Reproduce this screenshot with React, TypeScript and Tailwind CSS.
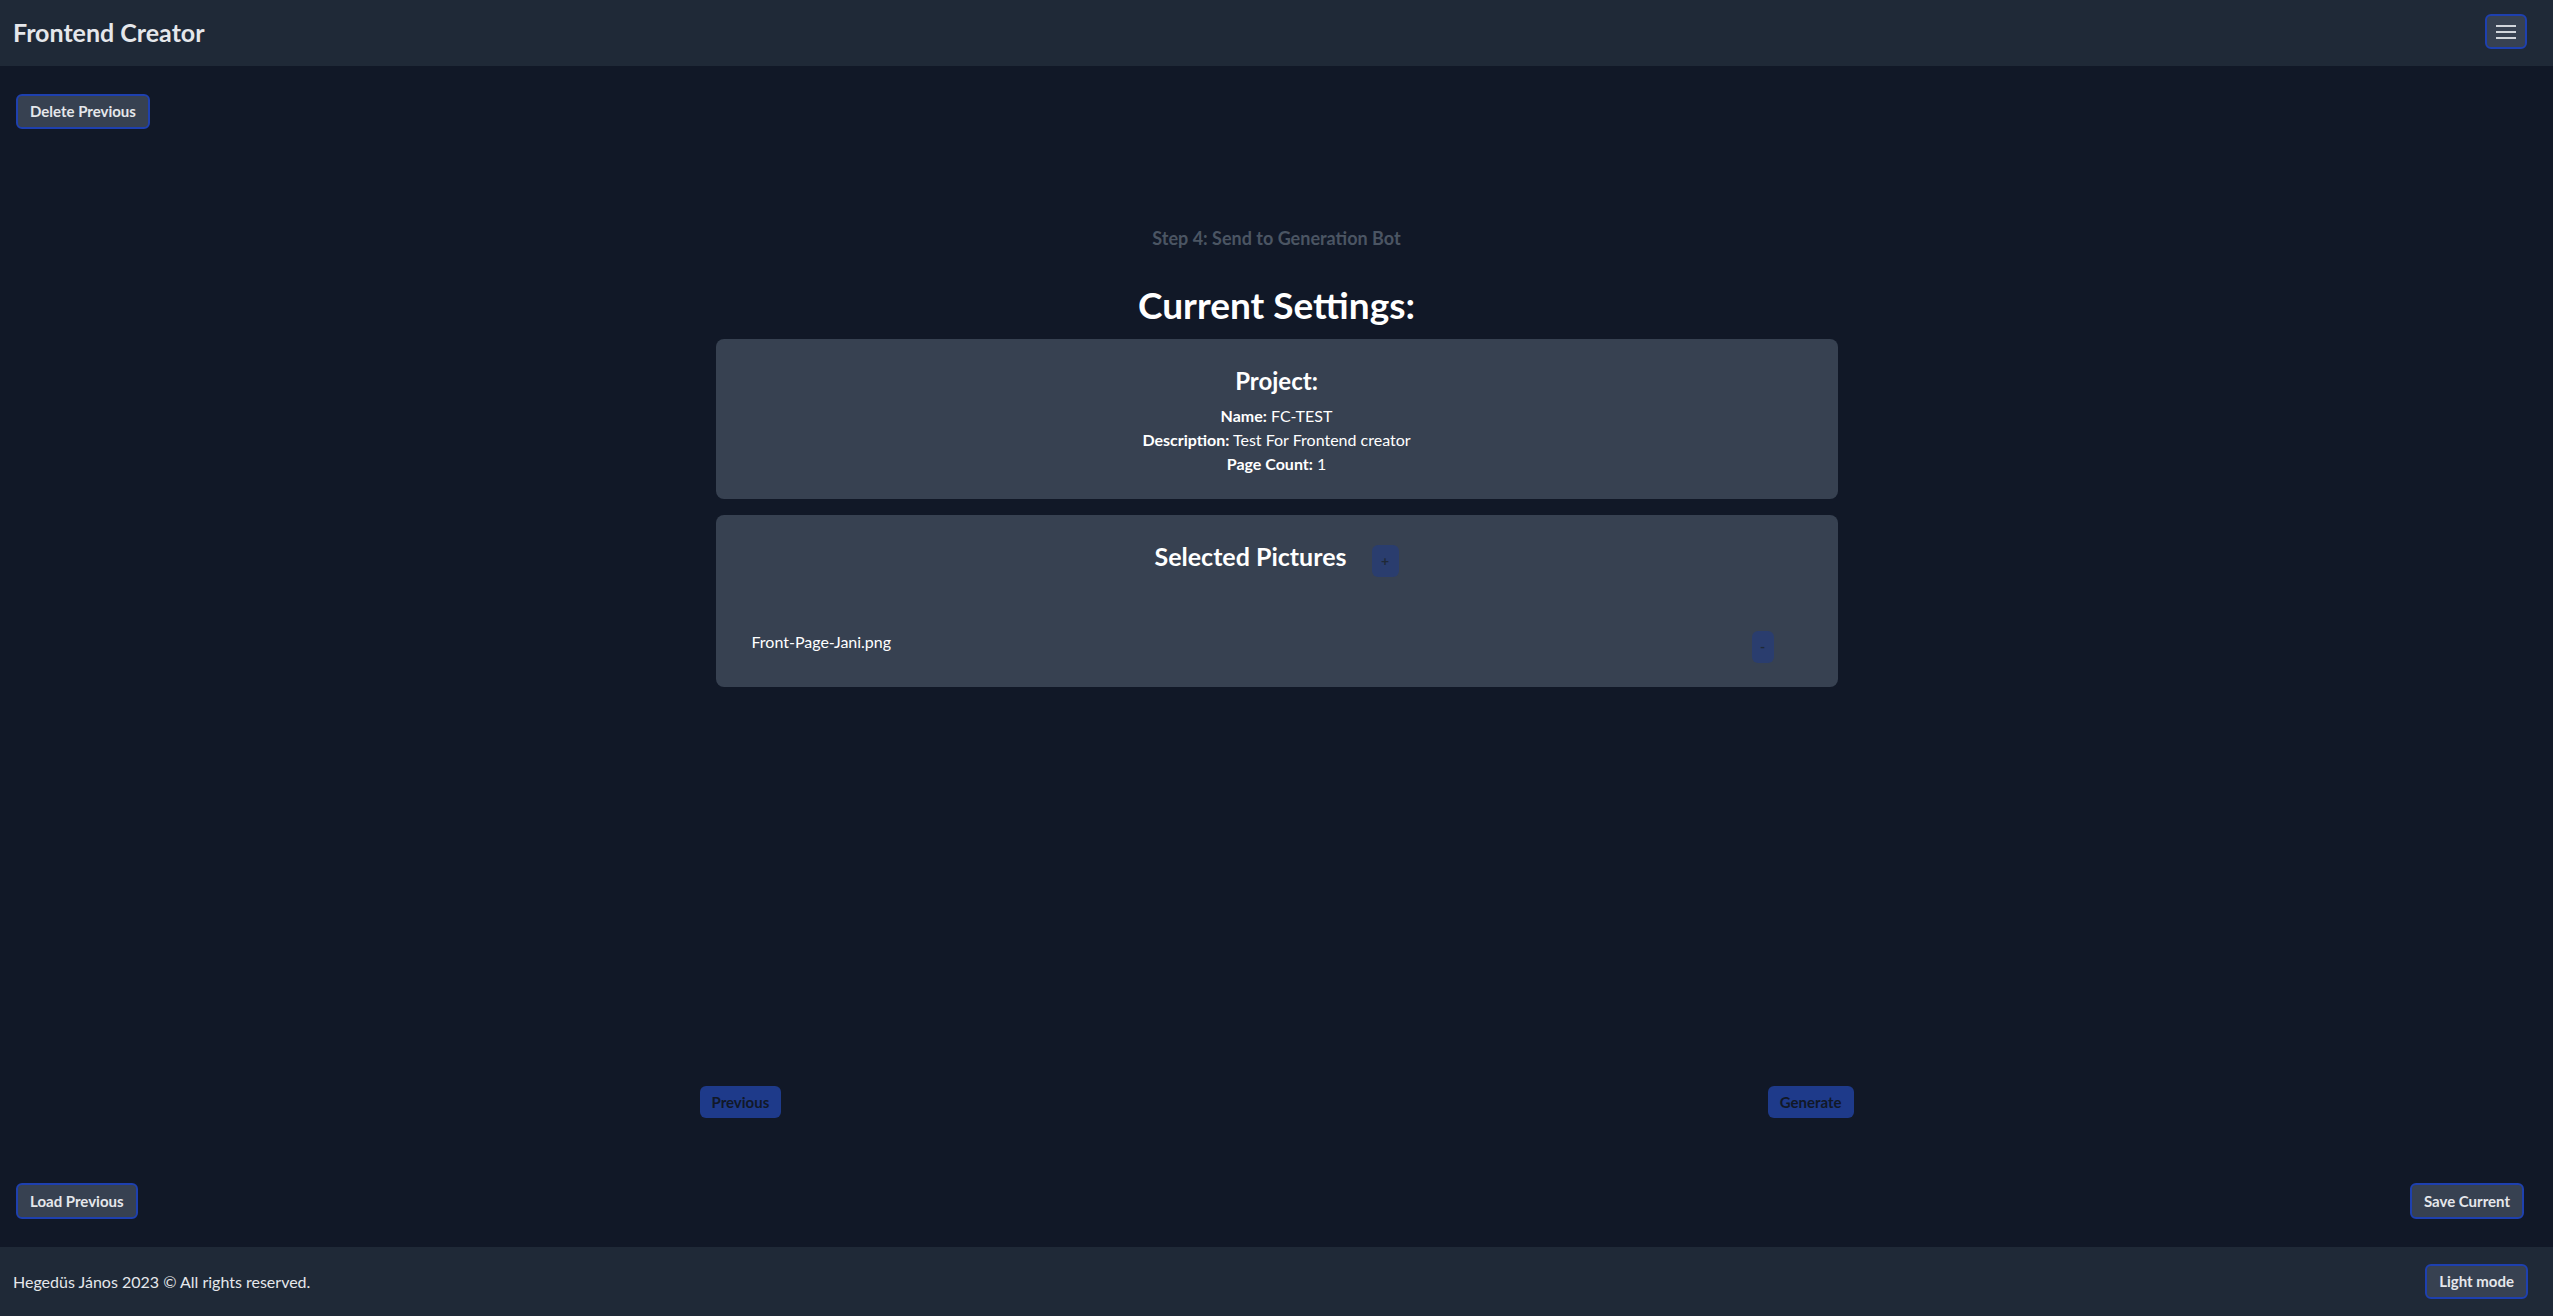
import React from 'react'

const outlineBtn =
  'rounded-md border-2 border-[#1e40af] bg-[#374151] px-3 text-[15px] font-bold text-[#e5e7eb]'

const blueBtn = 'h-8 rounded-md bg-[#1e3a8a] px-3 text-[15px] font-bold text-[#111827]'

function ProjectCard() {
  return (
    <div className="w-[1122px] rounded-lg bg-[#374151] pt-[26px] pb-[23px] text-center text-white">
      <h2 className="mb-[7px] text-2xl font-bold leading-8">Project:</h2>
      <p className="text-base leading-6">
        <span className="font-bold">Name:</span> FC-TEST
      </p>
      <p className="text-base leading-6">
        <span className="font-bold">Description:</span> Test For Frontend creator
      </p>
      <p className="text-base leading-6">
        <span className="font-bold">Page Count:</span> 1
      </p>
    </div>
  )
}

function PicturesCard() {
  const pictures = ['Front-Page-Jani.png']
  return (
    <div className="mt-4 w-[1122px] rounded-lg bg-[#374151] pt-[25px] pb-[24px] text-white">
      <div className="flex items-start justify-center">
        <h2 className="text-[25px] font-bold leading-8">Selected Pictures</h2>
        <button className="ml-[25px] mt-[5px] h-8 w-[27px] rounded-md bg-[#2a3d6e] text-sm font-bold text-[#1f2937]">
          +
        </button>
      </div>
      <ul className="mt-[53px]">
        {pictures.map(p => (
          <li key={p} className="flex items-start justify-between pl-9 pr-16">
            <span className="text-base leading-6">{p}</span>
            <button className="mt-px h-8 w-[22px] rounded-md bg-[#2a3d6e] text-sm font-bold text-[#1f2937]">
              -
            </button>
          </li>
        ))}
      </ul>
    </div>
  )
}

export default function App() {
  return (
    <div className="flex min-h-screen flex-col bg-[#111827] font-['Lato','Noto_Sans',sans-serif] text-[#e5e7eb]">
      {/* Header */}
      <header className="flex h-[66px] shrink-0 items-center justify-between bg-[#1f2937] pl-[13px] pr-[26px]">
        <h1 className="text-[25px] font-bold text-[#e5e7eb]">Frontend Creator</h1>
        <button className="-mt-[3px] flex h-[35px] w-[42px] flex-col items-center justify-center gap-[4px] rounded-md border-2 border-[#1e40af] bg-[#374151]">
          <span className="block h-[2px] w-5 bg-[#d1d5db]" />
          <span className="block h-[2px] w-5 bg-[#d1d5db]" />
          <span className="block h-[2px] w-5 bg-[#d1d5db]" />
        </button>
      </header>

      {/* Main */}
      <main className="flex flex-1 flex-col px-4 py-7">
        <div>
          <button className={`${outlineBtn} h-[35px]`}>Delete Previous</button>
        </div>

        <div className="flex flex-1 flex-col items-center">
          <p className="mt-[96px] text-lg font-bold leading-[26px] text-[#4b5563]">
            Step 4: Send to Generation Bot
          </p>
          <h1 className="mt-[34px] mb-[14px] text-[37px] font-bold leading-10 text-white">Current Settings:</h1>
          <ProjectCard />
          <PicturesCard />
        </div>

        <div className="mx-auto flex w-[1154px] justify-between">
          <button className={blueBtn}>Previous</button>
          <button className={blueBtn}>Generate</button>
        </div>

        <div className="mt-[65px] flex justify-between pr-[13px]">
          <button className={`${outlineBtn} h-9`}>Load Previous</button>
          <button className={`${outlineBtn} h-9`}>Save Current</button>
        </div>
      </main>

      {/* Footer */}
      <footer className="flex h-[69px] shrink-0 items-center justify-between bg-[#1f2937] pl-[13px] pr-[25px]">
        <p className="text-base text-[#e5e7eb]">Hegedüs János 2023 © All rights reserved.</p>
        <button className={`${outlineBtn} h-[35px]`}>Light mode</button>
      </footer>
    </div>
  )
}
